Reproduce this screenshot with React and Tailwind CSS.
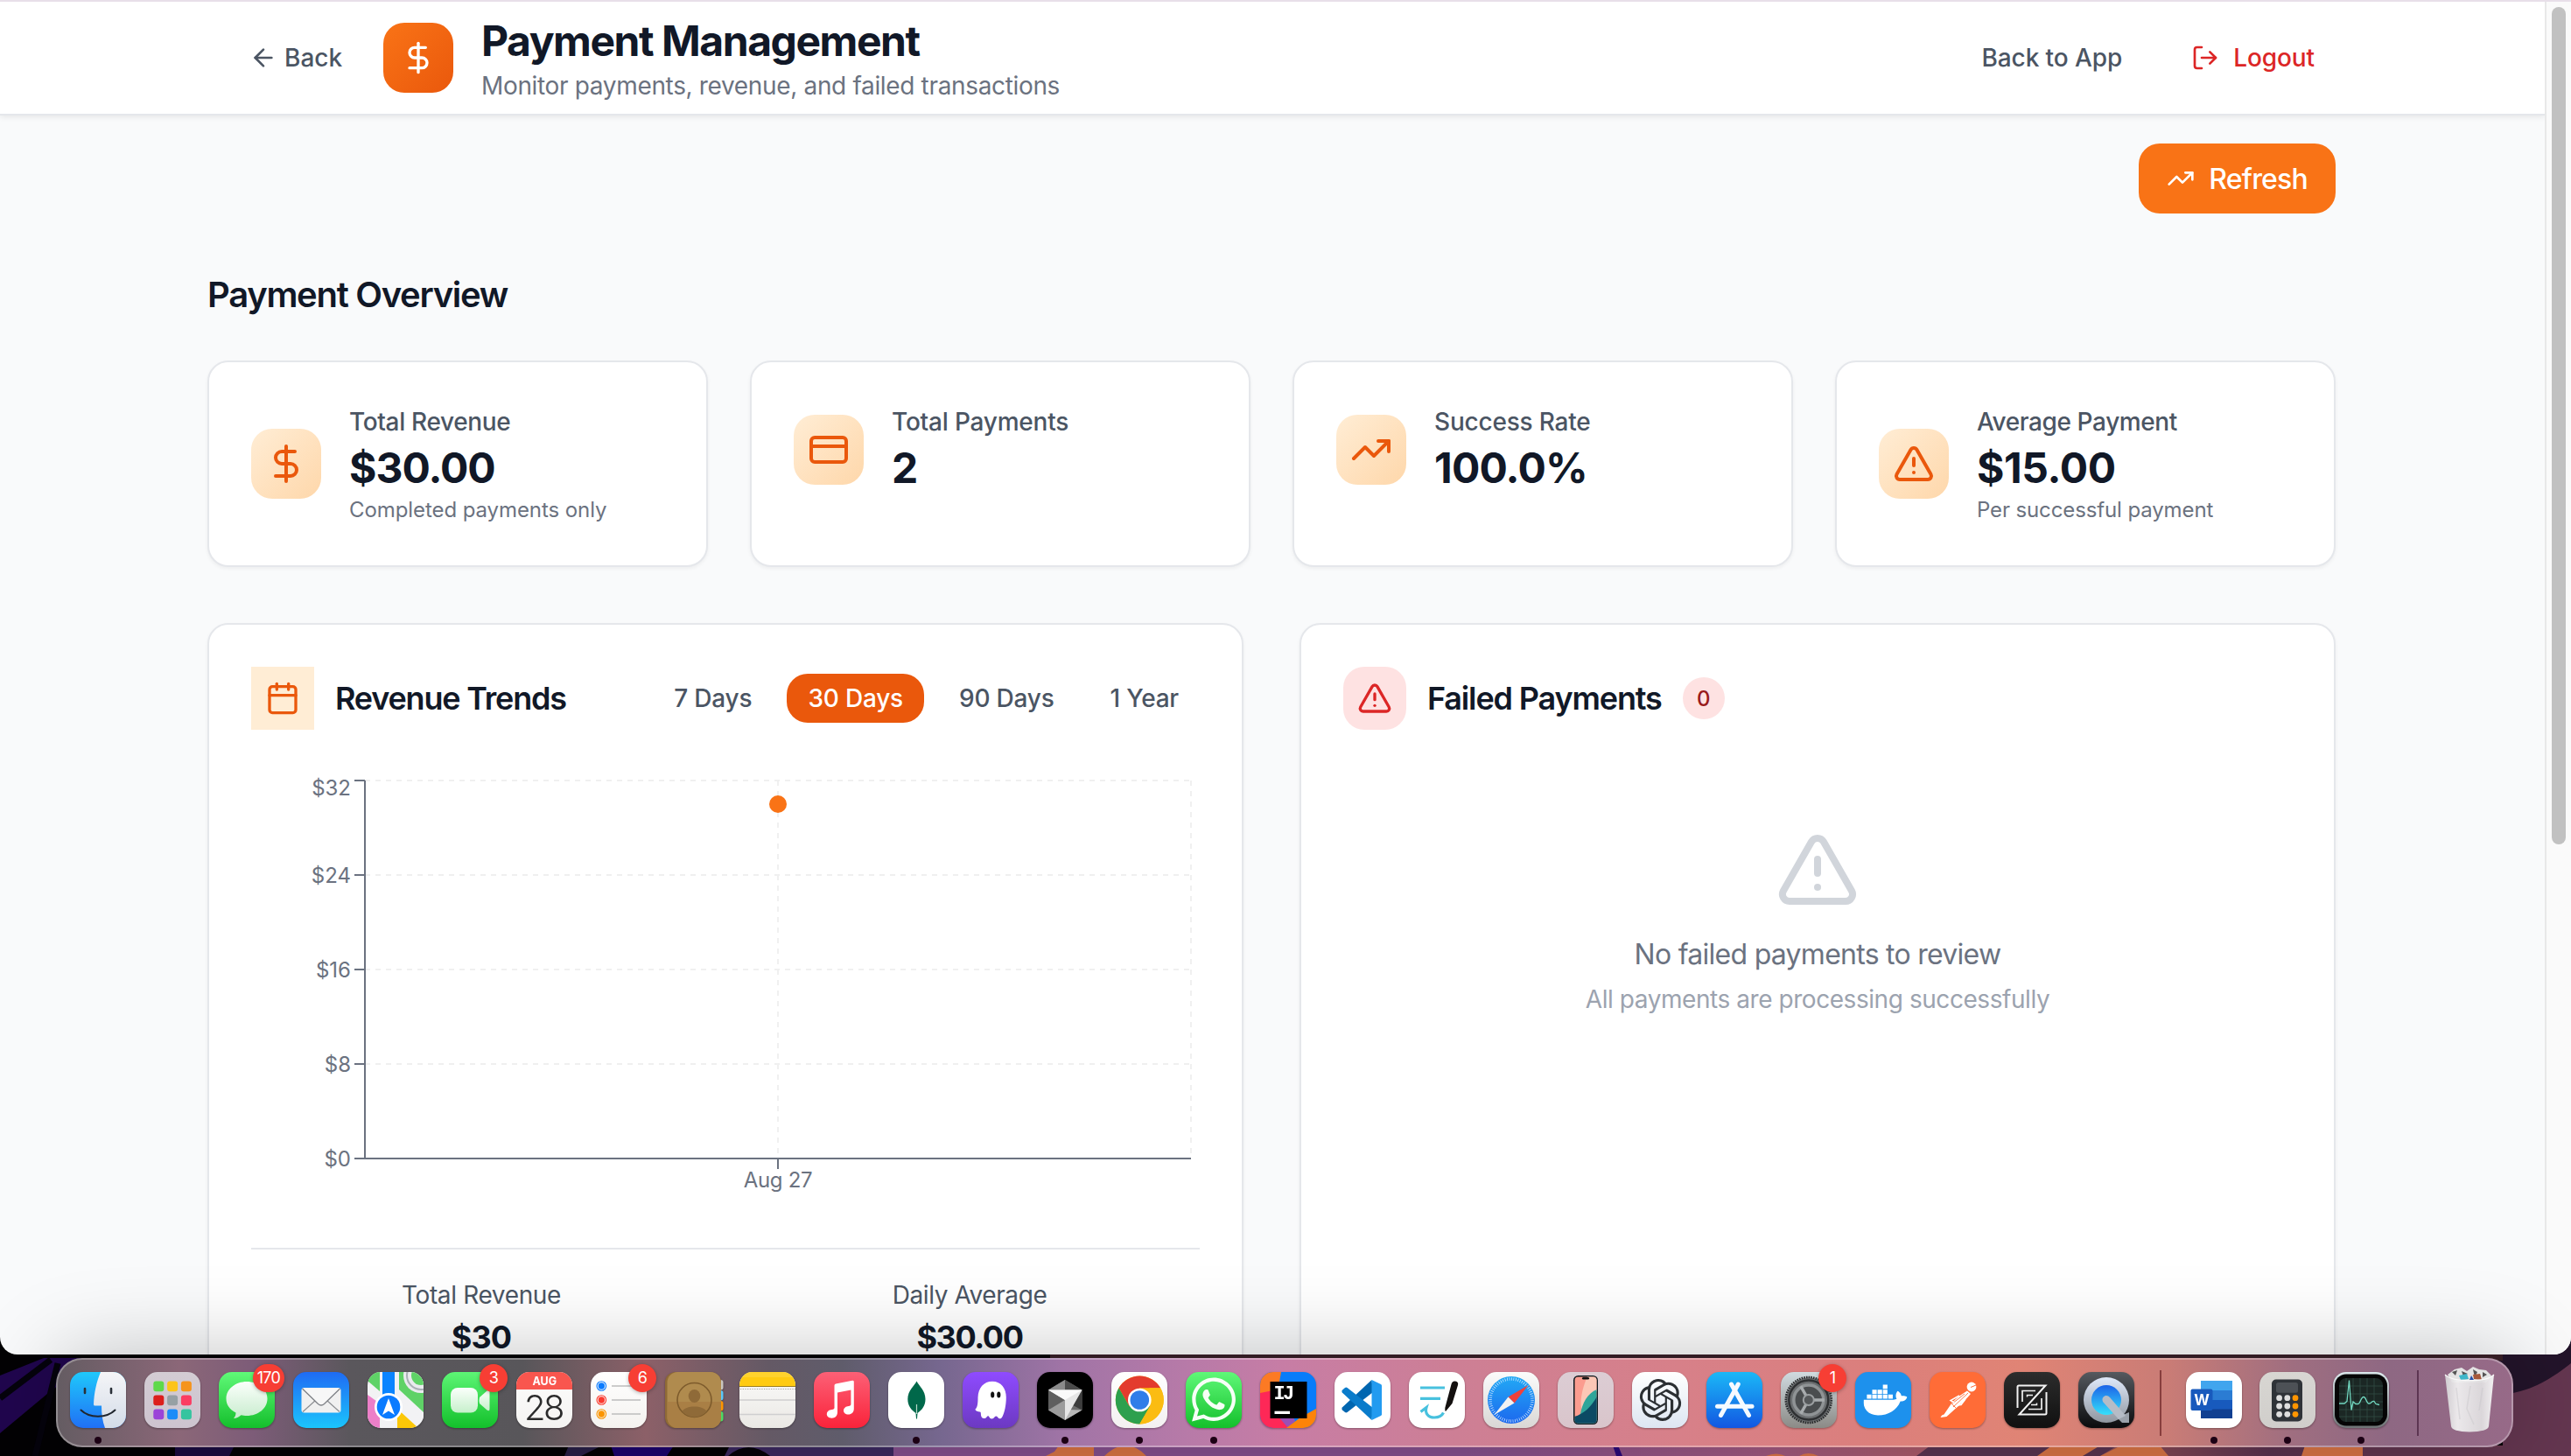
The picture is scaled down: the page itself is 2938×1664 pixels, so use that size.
import React from "react";
import {
  ArrowLeft,
  DollarSign,
  LogOut,
  TrendingUp,
  CreditCard,
  TriangleAlert,
  Calendar,
} from "lucide-react";
import { FaWhatsapp, FaDocker } from "react-icons/fa";
import { SiOpenai } from "react-icons/si";

/* ---------- page header ---------- */

function Header() {
  return (
    <header className="flex h-[130px] items-center justify-between border-b-2 border-gray-200 bg-white pl-[285px] pr-[263px] shadow-[0_2px_6px_rgba(0,0,0,0.08)]">
      <div className="flex items-center">
        <button className="flex w-[153px] items-center gap-2 text-[28px] leading-10 font-medium text-[#4b5563]">
          <ArrowLeft size={32} />
          Back
        </button>
        <div className="flex size-20 items-center justify-center rounded-3xl bg-linear-to-br from-[#f97316] to-[#ea580c]">
          <DollarSign size={40} className="text-white" />
        </div>
        <div className="ml-8">
          <h1 className="translate-y-px text-[48px] leading-[64px] font-bold tracking-[-1.45px] text-[#111827]">Payment Management</h1>
          <p className="text-[28px] leading-10 tracking-[-0.34px] text-[#6b7280]">
            Monitor payments, revenue, and failed transactions
          </p>
        </div>
      </div>
      <nav className="flex items-center gap-[79px] text-[28px] leading-10 font-medium">
        <span className="tracking-[-0.08px] text-[#4b5563]">Back to App</span>
        <span className="flex items-center gap-4 tracking-[-0.1px] text-[#dc2626]">
          <LogOut size={32} />
          Logout
        </span>
      </nav>
    </header>
  );
}

/* ---------- overview cards ---------- */

const stats = [
  { icon: DollarSign, label: "Total Revenue", lt: "tracking-[-0.35px]", value: "$30.00", vt: "tracking-[-1px]", note: "Completed payments only", nt: "tracking-[-0.08px]" },
  { icon: CreditCard, label: "Total Payments", lt: "tracking-[-0.2px]", value: "2", vt: "tracking-normal" },
  { icon: TrendingUp, label: "Success Rate", lt: "tracking-[-0.2px]", value: "100.0%", vt: "tracking-[-0.8px]" },
  { icon: TriangleAlert, label: "Average Payment", lt: "tracking-[-0.4px]", value: "$15.00", vt: "tracking-[-0.4px]", note: "Per successful payment", nt: "tracking-[-0.12px]" },
];

function StatCard({ icon: Icon, label, lt, value, vt, note, nt }) {
  return (
    <div className="h-[236px] rounded-3xl border-2 border-gray-200 bg-white p-12 shadow-[0_2px_4px_rgba(0,0,0,0.05)]">
      <div className="flex items-center gap-8">
        <div className="flex size-20 items-center justify-center rounded-3xl bg-linear-to-br from-[#ffedd5] to-[#fed7aa]">
          <Icon size={48} className="text-[#ea580c]" />
        </div>
        <div>
          <p className={"text-[28px] leading-10 font-medium text-[#4b5563] " + lt}>{label}</p>
          <p className={"translate-y-px text-[48px] leading-[64px] font-bold text-[#111827] " + vt}>{value}</p>
          {note && <p className={"translate-y-px text-[24px] leading-8 text-[#6b7280] " + nt}>{note}</p>}
        </div>
      </div>
    </div>
  );
}

/* ---------- revenue chart ---------- */

const yTicks = [
  ["$32", 16, 33],
  ["$24", 124, 133],
  ["$16", 232, 241],
  ["$8", 340, 349],
  ["$0", 448, 457],
];

function RevenueChart() {
  return (
    <svg width="1084" height="500" viewBox="0 0 1084 500" className="block">
      <g stroke="#f0f0f0" strokeWidth="2" strokeDasharray="6 6">
        {yTicks.map(([t, y]) => (
          <line key={t} x1="130" x2="1074" y1={y} y2={y} />
        ))}
        <line x1="602" x2="602" y1="16" y2="448" />
        <line x1="1074" x2="1074" y1="16" y2="448" />
      </g>
      <g stroke="#6b7280" strokeWidth="2">
        <line x1="130" x2="130" y1="16" y2="448" />
        <line x1="130" x2="1074" y1="448" y2="448" />
        <line x1="602" x2="602" y1="448" y2="460" />
        {yTicks.map(([t, y]) => (
          <line key={t} x1="118" x2="130" y1={y} y2={y} />
        ))}
      </g>
      <g fontSize="24" fill="#6b7280" fontFamily="Inter, sans-serif">
        {yTicks.map(([t, , b]) => (
          <text key={t} x="114" y={b} textAnchor="end">{t}</text>
        ))}
        <text x="602" y="481" textAnchor="middle" letterSpacing="-0.3">Aug 27</text>
      </g>
      <circle cx="602" cy="43" r="10" fill="#f97316" />
    </svg>
  );
}

function RevenueTrends() {
  return (
    <section className="h-[1000px] w-[1184px] rounded-3xl border-2 border-gray-200 bg-white p-12 shadow-[0_2px_4px_rgba(0,0,0,0.05)]">
      <div className="flex h-[72px] items-center justify-between">
        <div className="flex items-center gap-6">
          <div className="flex size-[72px] items-center justify-center bg-[#ffedd5]">
            <Calendar size={40} className="text-[#ea580c]" />
          </div>
          <h3 className="text-[36px] leading-[56px] font-semibold tracking-[-1.2px] text-[#111827]">Revenue Trends</h3>
        </div>
        <div className="flex gap-4 text-[28px] leading-10 font-medium tracking-[-0.2px] whitespace-nowrap text-[#4b5563]">
          <span className="px-6 py-2">7 Days</span>
          <span className="rounded-3xl bg-[#ea580c] px-6 py-2 text-white">30 Days</span>
          <span className="px-6 py-2">90 Days</span>
          <span className="px-6 py-2">1 Year</span>
        </div>
      </div>
      <div className="mt-[42px] h-[550px]">
        <RevenueChart />
      </div>
      <div className="grid grid-cols-2 gap-8 border-t-2 border-gray-200 pt-8 text-center">
        <div>
          <p className="text-[28px] leading-10 tracking-[-0.35px] text-[#4b5563]">Total Revenue</p>
          <p className="pt-2 text-[36px] leading-10 font-bold tracking-[-0.9px] text-[#111827]">$30</p>
        </div>
        <div>
          <p className="text-[28px] leading-10 tracking-[-0.4px] text-[#4b5563]">Daily Average</p>
          <p className="pt-2 text-[36px] leading-10 font-bold tracking-[-1.4px] text-[#111827]">$30.00</p>
        </div>
      </div>
    </section>
  );
}

function FailedPayments() {
  return (
    <section className="h-[1000px] w-[1184px] rounded-3xl border-2 border-gray-200 bg-white p-12 shadow-[0_2px_4px_rgba(0,0,0,0.05)]">
      <div className="flex h-[72px] items-center gap-6">
        <div className="flex size-[72px] items-center justify-center rounded-3xl bg-[#fee2e2]">
          <TriangleAlert size={40} className="text-[#dc2626]" />
        </div>
        <h3 className="text-[36px] leading-[56px] font-semibold tracking-[-1.15px] text-[#111827]">Failed Payments</h3>
        <span className="flex size-12 items-center justify-center rounded-full bg-[#fee2e2] pt-0.5 text-[24px] leading-8 font-medium text-[#991b1b]">
          0
        </span>
      </div>
      <div className="flex flex-col items-center pt-28">
        <TriangleAlert size={96} className="text-[#d1d5db]" />
        <p className="mt-6 translate-y-px text-[32px] leading-[48px] tracking-[-0.73px] text-[#6b7280]">No failed payments to review</p>
        <p className="mt-2 text-[28px] leading-10 tracking-[-0.44px] text-[#9ca3af]">
          All payments are processing successfully
        </p>
      </div>
    </section>
  );
}

/* ---------- dock icons, each on a 64 x 64 grid ---------- */

function Tile({ from, to = from, id, children }) {
  return (
    <svg width="64" height="64" viewBox="0 0 64 64" className="block overflow-visible drop-shadow-[0_1px_1px_rgba(0,0,0,0.35)]">
      <defs>
        <linearGradient id={"bg-" + id} x1="0" y1="0" x2="0" y2="1">
          <stop offset="0" stopColor={from} />
          <stop offset="1" stopColor={to} />
        </linearGradient>
        <clipPath id={"clip-" + id}>
          <rect width="64" height="64" rx="15" />
        </clipPath>
      </defs>
      <rect width="64" height="64" rx="15" fill={`url(#bg-${id})`} />
      <g clipPath={`url(#clip-${id})`}>{children}</g>
    </svg>
  );
}

const Finder = () => (
  <Tile id="finder" from="#1fc8fb" to="#2070f5">
    <defs>
      <linearGradient id="finder-face" x1="0" y1="0" x2="0" y2="1">
        <stop offset="0" stopColor="#f5f5f7" />
        <stop offset="1" stopColor="#d3dce8" />
      </linearGradient>
    </defs>
    <path d="M35 0 C30 12 27.500 24 27 37 Q27 38.500 28.500 38.500 H36 C36 48 37 56 40 64 H64 V0 Z" fill="url(#finder-face)" />
    <path d="M17 19v5M47 19v5" stroke="#2a3038" strokeWidth="2.600" strokeLinecap="round" />
    <path d="M12.500 43.500 C22 53 42 53 51.500 43.500" fill="none" stroke="#20262e" strokeWidth="2" strokeLinecap="round" />
  </Tile>
);

const padColors = ["#5fd94a", "#fcc419", "#f5941d", "#dc1f1c", "#96a0a4", "#fb3c62", "#9b44d8", "#1d8cf8", "#35c49f"];
const Launchpad = () => (
  <Tile id="launchpad" from="#d3ccd3" to="#cdc4cf">
    {padColors.map((c, i) => (
      <rect key={c} x={10.3 + (i % 3) * 15.800} y={10.500 + Math.floor(i / 3) * 16} width="12" height="11.800" rx="3" fill={c} />
    ))}
  </Tile>
);

const Messages = () => (
  <Tile id="messages" from="#60f978" to="#14bf2c">
    <defs>
      <linearGradient id="bubble" x1="0" y1="0" x2="0" y2="1">
        <stop offset="0" stopColor="#fbfffb" />
        <stop offset="1" stopColor="#c8ecce" />
      </linearGradient>
    </defs>
    <path d="M32 11 C45 11 55.500 19.500 55.500 30.500 C55.500 41.500 45 50 32 50 C29.500 50 27.500 49.700 25.500 49.200 C23 51.500 20 52.800 17 53 C18.700 51 19.500 49 19.500 46.500 C12.500 43 8.500 37.500 8.500 30.500 C8.500 19.500 19 11 32 11Z" fill="url(#bubble)" />
  </Tile>
);

const Mail = () => (
  <Tile id="mail" from="#1f6bf4" to="#1bc5fc">
    <rect x="9.500" y="18" width="45" height="28.500" rx="3" fill="#f0f0f0" />
    <path d="M11 45.500 L26 32 M53 45.500 L38 32" stroke="#8d8f93" strokeWidth="1.200" />
    <path d="M10.500 19 L28.500 36.500 Q32 39.500 35.500 36.500 L53.500 19" fill="#f7f7f7" stroke="#7e8186" strokeWidth="1.300" />
  </Tile>
);

const Maps = () => (
  <Tile id="maps" from="#f2f2f4">
    <path d="M0 10 L14 22 V0 H0Z" fill="#5fd267" />
    <path d="M36 0 H64 V50 L36 22Z" fill="#5fd267" />
    <circle cx="61" cy="4" r="20" fill="#e9eaee" />
    <circle cx="61" cy="4" r="16" fill="none" stroke="#a9b0b6" strokeWidth="2" />
    <circle cx="61" cy="4" r="11" fill="#5fd267" />
    <path d="M0 26 L14 36 V64 H0Z" fill="#ec7fc8" />
    <path d="M34 64 V42 L58 64Z" fill="#fbc707" />
    <path d="M36 30 L64 56 V46 L36 20Z" fill="#f2f2f4" />
    <rect x="17" y="0" width="14" height="36" fill="#0a84ff" />
    <circle cx="24" cy="40" r="16" fill="#fff" />
    <circle cx="24" cy="40" r="13.300" fill="#0a7bff" />
    <path d="M24 30 L31 49 L24 44.500 L17 49Z" fill="#fff" />
  </Tile>
);

const FaceTime = () => (
  <Tile id="facetime" from="#5df575" to="#13c02b">
    <defs>
      <linearGradient id="camera" x1="0" y1="0" x2="0" y2="1">
        <stop offset="0" stopColor="#fbfffb" />
        <stop offset="1" stopColor="#c6f0cb" />
      </linearGradient>
    </defs>
    <rect x="10" y="18" width="31" height="28.500" rx="8" fill="url(#camera)" />
    <path d="M43 29 L51.500 21.500 Q54.500 20 54.500 23 V42 Q54.500 45.500 51.500 43.500 L43 36 Q42 32.500 43 29Z" fill="url(#camera)" />
  </Tile>
);

const CalendarApp = () => (
  <Tile id="calendar" from="#fdfdfc" to="#f4f3f1">
    <rect width="64" height="20" fill="#f9564e" />
    <text x="32.300" y="15.200" textAnchor="middle" fontFamily="Inter, sans-serif" fontSize="12.500" fontWeight="700" fill="#fff">AUG</text>
    <text x="31" y="54.500" textAnchor="middle" fontFamily="Inter, sans-serif" fontSize="40" fontWeight="300" letterSpacing="-2.400" fill="#2b2b2b">28</text>
  </Tile>
);

const Reminders = () => (
  <Tile id="reminders" from="#ffffff" to="#f4f2ef">
    {["#0a7bff", "#fb3b30", "#fb9500"].map((c, i) => (
      <g key={c} transform={`translate(0 ${16 + i * 16})`}>
        <circle cx="12.300" r="5.300" fill="none" stroke={c} strokeWidth="1.100" />
        <circle cx="12.300" r="3.700" fill={c} />
        <path d="M24 0H57" stroke="#bdbdbd" strokeWidth="1.500" />
      </g>
    ))}
  </Tile>
);

const Contacts = () => (
  <svg width="64" height="64" viewBox="0 0 64 64" className="block overflow-visible drop-shadow-[0_1px_1px_rgba(0,0,0,0.35)]">
    {["#c9c6c0", "#5ac8fa", "#ff9500", "#4cd964"].map((c, i) => (
      <rect key={c} x="54" y={9 + i * 12} width="12.500" height="11.500" rx="3" fill={c} />
    ))}
    <rect width="64" height="64" rx="12" fill="#8f6a35" />
    <rect x="2.500" width="61.500" height="64" rx="12" fill="#b08b4e" />
    <path d="M2.500 34 H64 V52 A12 12 0 0 1 52 64 H14.500 A12 12 0 0 1 2.500 52Z" fill="#a67a42" opacity="0.7" />
    <circle cx="33.500" cy="32" r="19.500" fill="none" stroke="#7d5b2c" strokeWidth="1.600" />
    <ellipse cx="33.500" cy="27.500" rx="6.800" ry="7.500" fill="#8f6a38" />
    <path d="M19.500 45 C23 37.500 44 37.500 47.500 45 C40 53.500 27 53.500 19.500 45Z" fill="#8f6a38" />
  </svg>
);

const Notes = () => (
  <Tile id="notes" from="#fbfbfa" to="#eae8e4">
    <rect width="64" height="16" fill="#ffcb12" />
    <rect width="64" height="6" fill="#ffd940" opacity="0.6" />
    <path d="M0 16.500H64" stroke="#9c7f20" strokeWidth="1" />
    <path d="M1 19.500H64" stroke="#a5a5a5" strokeWidth="1.200" strokeDasharray="1.200 1.500" />
    <path d="M0 32H64M0 48.500H64" stroke="#cfced0" strokeWidth="1.300" />
  </Tile>
);

const Music = () => (
  <Tile id="music" from="#fc6076" to="#fa233a">
    <path d="M24.500 15.500 Q24.500 14 26 13.600 L45 9.800 Q46.800 9.500 46.800 11.200 V42 C46.800 46.200 44 48.500 40.500 48.500 C37 48.500 35 46.500 35 44 C35 41.500 36.800 39.700 39.500 39.200 L42 38.700 Q43.400 38.400 43.400 37 V20.500 L28 23.600 V46 C28 50.200 25.200 52.700 21.500 52.700 C18 52.700 15.800 50.700 15.800 48 C15.800 45.500 17.600 43.700 20.300 43.200 L23 42.700 Q24.500 42.300 24.500 41Z" transform="translate(-1 0)" fill="#fff" />
  </Tile>
);

const MongoDB = () => (
  <Tile id="mongo" from="#ffffff">
    <path d="M32.500 10.500 C35 16 42.500 21 42.500 31 C42.500 38.500 38.500 43.500 33.500 47 L33 53.500 H32 L31.500 47 C26.500 43.500 22.300 38.500 22.300 31 C22.300 21 30 16 32.500 10.500Z" fill="#00684a" />
    <path d="M32.500 37 V48" stroke="#b9d8c9" strokeWidth="1.200" />
  </Tile>
);

const Ghost = () => (
  <Tile id="ghost" from="#8f4bff" to="#6c39c2">
    <path d="M34 10.700 C44 10.700 49.800 18.500 49.800 29 C49.800 38 48 46 45.500 51 C44 54 41.500 54 40 51.500 C39 50 37.500 50 36.500 51.500 C35 54 31.500 54 30.500 51.500 C29.800 49.800 28.500 50 27.500 51.500 C25.500 54 21.500 53.500 21 49.500 C20.800 47 21 46 20 45.500 C17.500 45.500 14.500 44.500 14.500 42.500 C17 40.500 17.500 36 17.500 29 C18 18 24 10.700 34 10.700Z" fill="#fff" />
    <ellipse cx="34.200" cy="26" rx="2.100" ry="3.500" fill="#111" />
    <ellipse cx="41.300" cy="26" rx="2.100" ry="3.500" fill="#111" />
  </Tile>
);

const Cursor = () => (
  <Tile id="cursor" from="#000000">
    <path d="M32 9 L51.500 20.500 V43.500 L32 55 L13 43.500 V20.500Z" fill="#6e6e6e" />
    <path d="M32 9 L51.500 20.500 H13Z" fill="#4b4b4b" />
    <path d="M32 9 V20.500 H13Z" fill="#8a8a8a" />
    <path d="M13 20.500 L32 32 L13 43.500Z" fill="#5f5f5f" />
    <path d="M13 43.500 L32 32 V55Z" fill="#9c9c9c" />
    <path d="M32 43 L51.500 43.500 L32 55Z" fill="#b8b8b8" />
    <path d="M51.500 20.500 V43.500 L41 38Z" fill="#3d3d3d" />
    <path d="M13 20.500 H51.500 L32 55 V32Z" fill="#e6e6e6" />
    <path d="M13 20.500 H51.500 L32 32Z" fill="#fafafa" />
  </Tile>
);

const Chrome = () => (
  <Tile id="chrome" from="#ffffff" to="#f3f1f1">
    <g transform="translate(32.300 32)">
      <circle r="27.500" fill="#fbbc12" />
      <path d="M-23.800 -13.800 A27.500 27.500 0 0 1 23.800 -13.800 H0 L-11.900 6.900Z" fill="#e33b2e" />
      <path d="M-23.800 -13.800 A27.500 27.500 0 0 0 0 27.500 L11.900 6.900 L0 0 L-11.900 6.900Z" fill="#2da04e" />
      <path d="M23.800 -13.800 A27.500 27.500 0 0 1 0 27.500 L11.900 6.900 L11 -13.800Z" fill="#fbbc12" />
      <circle r="13.300" fill="#fff" />
      <circle r="10.800" fill="#2f7de9" />
    </g>
  </Tile>
);

const WhatsApp = () => (
  <Tile id="whatsapp" from="#5ff878" to="#14c02b">
    <FaWhatsapp x="3.500" y="3" size={57} color="#f6fff6" />
  </Tile>
);

const IntelliJ = () => (
  <Tile id="intellij" from="#087cfa">
    <path d="M0 0 H24 L18 34 L0 40Z" fill="#fc7a24" />
    <path d="M0 24 L20 20 L38 64 H0Z" fill="#fe2857" />
    <path d="M20 50 L34 44 L40 56 L32 64Z" fill="#9a4fb5" />
    <path d="M64 42 V64 H30 L46 52Z" fill="#fd8309" />
    <rect x="11.500" y="11" width="42" height="42" fill="#000" />
    <text x="15.500" y="31" fontFamily="Liberation Mono, monospace" fontWeight="700" fontSize="22" letterSpacing="-2.800" fill="#fff">IJ</text>
    <rect x="16.500" y="44.700" width="17.500" height="3.300" fill="#fff" />
  </Tile>
);

const VSCode = () => (
  <Tile id="vscode" from="#ffffff">
    <path d="M42.500 9 L8.800 40.500 Q7.800 42 8.800 43.200 L12 46 Q13.200 46.800 14.600 46 L44 23Z" fill="#0066b0" />
    <path d="M42.500 55 L8.800 23.500 Q7.800 22 8.800 20.800 L12 18 Q13.200 17.200 14.600 18 L44 41Z" fill="#0a7ccb" />
    <path d="M42.500 9 L53 14 Q54 14.600 54 15.800 V48.200 Q54 49.400 53 50 L42.500 55Z" fill="#229bf0" />
  </Tile>
);

const Goodnotes = () => (
  <Tile id="goodnotes" from="#ffffff">
    <path d="M13 18H41M13 30.300H36" stroke="#48c1de" strokeWidth="3.200" />
    <path d="M13.500 45.500 L20 40.500 C18 47 22 52 29 52 C34 52 37.500 50.500 39.500 46.500" fill="none" stroke="#48c1de" strokeWidth="3.200" />
    <path d="M48.500 14 Q49.500 10 53 10.500 Q57 11.300 56 15 L49.500 36 L42 45 Q41 44 41.300 41Z" fill="#14100f" />
  </Tile>
);

const Safari = () => (
  <Tile id="safari" from="#fbfbfb" to="#d9d7d5">
    <defs>
      <linearGradient id="compass" x1="0" y1="0" x2="0" y2="1">
        <stop offset="0" stopColor="#22a9f5" />
        <stop offset="1" stopColor="#1c68ee" />
      </linearGradient>
    </defs>
    <circle cx="32" cy="32" r="27" fill="url(#compass)" />
    <circle cx="32" cy="32" r="24" fill="none" stroke="#d8ecff" strokeWidth="3.500" strokeDasharray="0.700 1.800" />
    <path d="M51.500 15 L35.500 35.500 L28.500 28.500Z" fill="#f0413b" />
    <path d="M12.500 49 L28.500 28.500 L35.500 35.500Z" fill="#f2f2f2" />
  </Tile>
);

const IPhone = () => (
  <Tile id="iphone" from="#dccdd4" to="#d9c5cb">
    <defs>
      <clipPath id="phone-screen">
        <rect x="19.500" y="5.500" width="25" height="53" rx="4" />
      </clipPath>
    </defs>
    <rect x="18" y="4" width="28" height="56" rx="5.500" fill="#0c1a20" />
    <g clipPath="url(#phone-screen)">
      <rect x="19" y="5" width="26" height="54" fill="#fb9c8f" />
      <path d="M34 5 H45 V22 C38 24 30 34 28 45 C24 32 30 14 34 5Z" fill="#fbc7b6" />
      <path d="M45 20 C34 24 28 36 26 48 L19 54 V59 H45Z" fill="#2fa59a" />
      <path d="M45 28 C38 40 30 48 19 51 V59 H45Z" fill="#0b4a64" />
    </g>
    <rect x="28" y="6" width="8" height="2.600" rx="1.300" fill="#111" />
  </Tile>
);

const ChatGPT = () => (
  <Tile id="chatgpt" from="#ffffff" to="#dde6f2">
    <SiOpenai x="8.500" y="8" size={48} color="#2b2f33" />
  </Tile>
);

const AppStore = () => (
  <Tile id="appstore" from="#1bb8f7" to="#1257e2">
    <g stroke="#f5faff" strokeWidth="5" strokeLinecap="round">
      <path d="M12.500 39.300H52" />
      <path d="M28.500 14L48.500 49.500" />
      <path d="M36.300 14L16.500 49.500" />
    </g>
  </Tile>
);

const Settings = () => (
  <Tile id="settings" from="#d0dbe0" to="#8b8a86">
    <g transform="translate(31.800 32)" fill="none">
      <circle r="25.500" fill="#6b6e70" />
      <circle r="26" stroke="#2b2d2f" strokeWidth="2.600" strokeDasharray="1.700 1" />
      <circle r="22.500" stroke="#2e3032" strokeWidth="2.500" />
      <circle r="17" fill="#4a4d4f" stroke="#8f9395" strokeWidth="3.500" />
      <path d="M6 0H18M-3 -5.200L-9 -15.600M-3 5.200L-9 15.600" stroke="#a7abad" strokeWidth="3.400" />
      <circle r="6" fill="#55585a" stroke="#9b9fa1" strokeWidth="2" />
    </g>
  </Tile>
);

const Docker = () => (
  <Tile id="docker" from="#1d91ed">
    <FaDocker x="9.500" y="7" size={50} color="#fff" />
  </Tile>
);

const Postman = () => (
  <Tile id="postman" from="#ff6c37">
    <circle cx="48" cy="17" r="5.400" fill="#fff" />
    <path d="M47 17.500L53 15" stroke="#ff6c37" strokeWidth="1" />
    <path d="M43 21.500 L47 25 C42 31 36 37 30 41.500 L19.500 51 L12.500 52 L14 49.500 L16.500 48.500 L25 36 C30 30 37 25 43 21.500Z" fill="#fff" />
    <path d="M44 24L27 40M40 25L26 36M25 36L30 41" stroke="#ff6c37" strokeWidth="0.900" />
    <path d="M34 27L24 32.500L28 35M41 31L36 37.500L31 38" fill="none" stroke="#fff" strokeWidth="1.500" />
  </Tile>
);

const Zed = () => (
  <Tile id="zed" from="#2c2c2c" to="#101010">
    <g fill="none" stroke="#f2f2f2" strokeWidth="2">
      <path d="M15.500 41V17Q15.500 15.500 17 15.500H47.500L17.500 48.500H47Q48.500 48.500 48.500 47V23" />
      <path d="M21 34V21.500H36M43 30V42.500H28" strokeWidth="1.700" />
      <path d="M26.500 28.500V26.500H33M37.500 35.500V37.500H31" strokeWidth="1.500" />
    </g>
  </Tile>
);

const QuickTime = () => (
  <Tile id="quicktime" from="#55595f" to="#0a0b0d">
    <defs>
      <linearGradient id="q-ring" x1="0" y1="0" x2="0" y2="1">
        <stop offset="0" stopColor="#dfe9fa" />
        <stop offset="1" stopColor="#8f969f" />
      </linearGradient>
      <linearGradient id="q-lens" x1="0" y1="0" x2="0" y2="1">
        <stop offset="0" stopColor="#1c63e8" />
        <stop offset="1" stopColor="#35e0fb" />
      </linearGradient>
    </defs>
    <circle cx="32" cy="32" r="26" fill="url(#q-ring)" />
    <path d="M58 46 V58 H50 L44 52Z" fill="#9aa1aa" />
    <circle cx="32" cy="32" r="17" fill="url(#q-lens)" />
    <path d="M28 34 Q26 29 31 27 Q34 26.500 36 29 L54 50 L46 54Z" fill="#b5bcc6" />
  </Tile>
);

const Word = () => (
  <Tile id="word" from="#ffffff">
    <rect x="17" y="10" width="36" height="11" fill="#41a5ee" />
    <rect x="17" y="21" width="36" height="11" fill="#2b7cd3" />
    <rect x="17" y="32" width="36" height="11" fill="#185abd" />
    <rect x="17" y="42.500" width="36" height="10.500" fill="#103f91" />
    <rect x="5.500" y="19.500" width="25" height="24.500" rx="2" fill="#185abd" />
    <text x="18" y="38" textAnchor="middle" fontFamily="Inter, sans-serif" fontWeight="700" fontSize="17" fill="#fff">W</text>
  </Tile>
);

const Calculator = () => (
  <Tile id="calculator" from="#d8d6d2" to="#d0cecb">
    <rect x="14" y="8.500" width="35" height="48" rx="5" fill="#2f3338" />
    <rect x="19" y="12" width="25" height="11.800" rx="2.500" fill="#4d5156" />
    {[29.700, 39, 48.300].map((y) =>
      [22.600, 31.800, 41].map((x, i) => (
        <circle key={x + "-" + y} cx={x} cy={y} r="3.400" fill={i === 2 ? "#ff9500" : "#dedede"} />
      ))
    )}
  </Tile>
);

const Activity = () => (
  <Tile id="activity" from="#dce8ec" to="#6e7375">
    <rect x="2" y="2.500" width="60" height="59" rx="13" fill="#050505" />
    <rect x="7" y="7" width="50" height="50" rx="8" fill="#1b2724" />
    <path d="M15 7V57M23 7V57M31 7V57M39 7V57M47 7V57M7 16H57M7 25H57M7 34H57M7 43H57M7 51H57" stroke="#314b45" strokeWidth="0.800" />
    <path d="M7 36 H13 L16 33.500 L18.500 9.500 L21 43.500 L23 34 L26 36.500 H29 C31 36.500 32 28.500 35 28.500 C38 28.500 38 36 41 36 C44 36 44 33 47 33.500 L49 36.500 L53 37.500" fill="none" stroke="#72d8c0" strokeWidth="1.300" />
  </Tile>
);

const Trash = () => (
  <svg width="58" height="76" viewBox="0 0 58 76" className="block overflow-visible">
    <defs>
      <linearGradient id="bin" x1="0" y1="0" x2="1" y2="0">
        <stop offset="0" stopColor="#d2d0d3" />
        <stop offset="0.250" stopColor="#f0eff0" />
        <stop offset="0.750" stopColor="#dedcde" />
        <stop offset="1" stopColor="#f7f7f7" />
      </linearGradient>
    </defs>
    <path d="M4 9 L12 3 L20 1 L26 5 L33 0 L40 3 L48 4 L54 10 L48 18 H9Z" fill="#e4e4e4" />
    <path d="M9 6L15 4L13 10ZM20 5L27 8L22 11ZM33 3L38 6L35 12ZM44 6L49 9L44 12Z" fill="#555" />
    <path d="M17 10L26 8L28 14L19 15Z" fill="#3fb6c9" />
    <path d="M33 9L41 8L43 15L34 14Z" fill="#a5583a" />
    <path d="M31 10L34 15L29 15Z" fill="#2450a8" />
    <path d="M1 9 C10 18 48 18 57 9 L51 68 Q50 74 29 74.500 Q9 74 8 68Z" fill="url(#bin)" fillOpacity="0.95" />
    <path d="M1 9 C10 18 48 18 57 9" fill="none" stroke="#fafafa" strokeWidth="1.200" />
    <path d="M14 24L18 60M30 22L26 48L34 66M44 24L40 50" stroke="#c9c7cb" strokeWidth="1.500" fill="none" opacity="0.5" />
  </svg>
);

const dockApps = [
  { app: Finder, running: true },
  { app: Launchpad },
  { app: Messages, badge: "170" },
  { app: Mail },
  { app: Maps },
  { app: FaceTime, badge: "3" },
  { app: CalendarApp },
  { app: Reminders, badge: "6" },
  { app: Contacts },
  { app: Notes },
  { app: Music },
  { app: MongoDB, running: true },
  { app: Ghost },
  { app: Cursor, running: true },
  { app: Chrome, running: true },
  { app: WhatsApp, running: true },
  { app: IntelliJ },
  { app: VSCode },
  { app: Goodnotes },
  { app: Safari },
  { app: IPhone },
  { app: ChatGPT },
  { app: AppStore },
  { app: Settings, badge: "1" },
  { app: Docker },
  { app: Postman },
  { app: Zed },
  { app: QuickTime },
];
const openApps = [Word, Calculator, Activity];

function DockItem({ app: App, badge, running }) {
  return (
    <div className="relative flex h-[98px] w-16 flex-none flex-col items-center pt-3.5">
      <App />
      {running && <span className="mt-2.5 size-2 rounded-full bg-[#1c0014]" />}
      {badge && (
        <span className="absolute top-[5px] -right-[11px] flex h-8 min-w-8 items-center justify-center rounded-full bg-[#f73e34] px-[5px] text-[18px] leading-none tracking-[-0.8px] text-white shadow-[0_1px_4px_rgba(0,0,0,0.3)]">
          {badge}
        </span>
      )}
    </div>
  );
}

function Dock() {
  return (
    <div className="absolute bottom-2.5 left-16 flex h-[102px] w-[2808px] rounded-[30px] border-2 border-white/30 bg-[linear-gradient(90deg,#645c62_0%,#8b6778_5%,#7d5c78_8%,#5a575c_12%,#58565a_19%,#8c6068_24%,#645965_29%,#5f5c6b_32%,#76678f_36%,#a074a6_41%,#b77aa8_46%,#c77da5_50%,#cd7f95_57%,#d78089_66%,#db7f7c_74%,#e08475_80%,#c97c76_86%,#9f6e80_91%,#8e6883_95%,#976a88_100%)] bg-origin-border pl-3.5 shadow-[0_0_100px_rgba(0,0,0,0.26)]">
      <div className="flex gap-[21px]">
        {dockApps.map((d, i) => (
          <DockItem key={i} {...d} />
        ))}
      </div>
      <div className="mt-3 ml-[29px] h-[75px] w-0.5 bg-[#5a1418]/60" />
      <div className="ml-[28px] flex gap-5">
        {openApps.map((a, i) => (
          <DockItem key={i} app={a} running />
        ))}
      </div>
      <div className="mt-3 ml-[32px] h-[75px] w-0.5 bg-[#3c1430]/60" />
      <div className="mt-2 ml-[29px]">
        <Trash />
      </div>
    </div>
  );
}

/* ---------- desktop wallpaper showing round the window ---------- */

function Wallpaper() {
  return (
    <svg width="2938" height="136" viewBox="0 0 2938 136" className="absolute bottom-0 left-0">
      <defs>
        <linearGradient id="sky" x1="0" y1="0" x2="1" y2="0">
          <stop offset="0.340" stopColor="#885190" />
          <stop offset="0.520" stopColor="#a35a82" />
          <stop offset="0.680" stopColor="#b5605e" />
          <stop offset="0.820" stopColor="#5c3350" />
          <stop offset="1" stopColor="#6c394c" />
        </linearGradient>
      </defs>
      <rect width="2938" height="136" fill="#030204" />
      <path d="M0 44 L50 24 H112 L60 60 L0 110Z" fill="#20064e" />
      <path d="M0 70 L58 26 M40 136 L66 30" stroke="#05030c" strokeWidth="7" />
      <path d="M200 136 V124 H268 L262 136Z" fill="#1b0c42" />
      <path d="M645 136 L650 124 H688 L664 136Z" fill="#2a2048" />
      <path d="M698 124 H770 L762 136 H702Z" fill="#1d0470" />
      <path d="M828 136 L834 124 H1022 V136Z" fill="#3d2a62" />
      <path d="M832 136 Q855 116 880 136Z" fill="#050308" />
      <rect x="1021" y="124" width="1917" height="12" fill="url(#sky)" />
      <path d="M1195 136 L1205 131 L1210 124 H1250 V136ZM1262 136 Q1287 112 1310 136Z" fill="#dd7645" />
      <path d="M1843 124H1849L1854 136H1847Z" fill="#2c0a7c" />
      <path d="M2018 136 Q2030 131 2040 136ZM2056 136 Q2066 130 2078 136Z" fill="#e0764a" />
      <path d="M2190 136 L2206 124 H2420 L2400 136Z" fill="#5c3552" />
      <path d="M2328 136 L2345 124 H2400 L2380 136ZM2400 136 L2424 124 H2468 L2478 136ZM2630 136 L2634 124 H2718 L2748 136Z" fill="#dd7747" />
      <path d="M2860 24 H2938 V136 H2700 V126 H2860Z" fill="#643650" />
      <path d="M2840 0 H2938 V30 C2910 52 2890 62 2860 66Z" fill="#23142a" />
      <rect x="1200" y="19" width="1660" height="8" fill="#3a2028" />
    </svg>
  );
}

export default function App() {
  return (
    <div className="relative h-[1664px] w-[2938px] overflow-hidden bg-black font-['Inter',sans-serif]">
      <Wallpaper />
      <div className="relative flex h-[1548px] overflow-hidden rounded-b-[20px] border-t-2 border-[#e8dfe9] bg-[#f9fafb]">
        <div className="w-[2908px] flex-none">
          <Header />
          <main className="pr-[239px] pl-[237px]">
            <div className="flex justify-end pt-8">
              <button className="flex h-20 items-center gap-4 rounded-3xl bg-[#f97316] px-8 text-[32px] leading-[48px] font-medium tracking-[-0.8px] text-white">
                <TrendingUp size={32} />
                <span className="translate-y-px">Refresh</span>
              </button>
            </div>
            <h2 className="mt-16 translate-y-px text-[40px] leading-[56px] font-semibold tracking-[-1.3px] text-[#111827]">Payment Overview</h2>
            <div className="mt-12 grid grid-cols-4 gap-12">
              {stats.map((s) => (
                <StatCard key={s.label} {...s} />
              ))}
            </div>
            <div className="mt-16 flex gap-16">
              <RevenueTrends />
              <FailedPayments />
            </div>
          </main>
        </div>
        <div className="flex w-[30px] flex-none justify-center border-l-2 border-[#e8e8e8] bg-[#fafafa] pt-1.5">
          <div className="h-[957px] w-4 rounded-full bg-[#c1c1c1]" />
        </div>
      </div>
      <Dock />
    </div>
  );
}
